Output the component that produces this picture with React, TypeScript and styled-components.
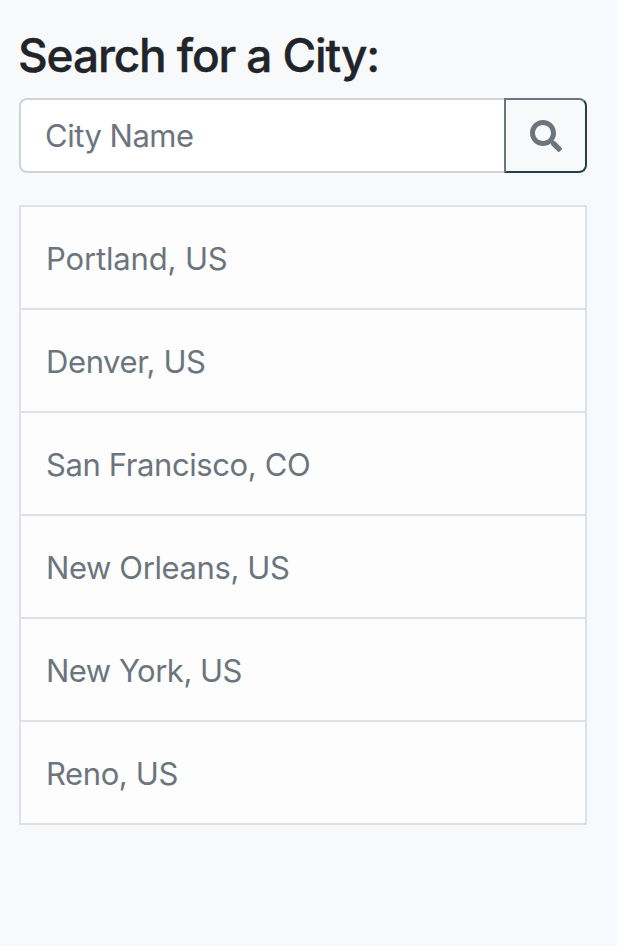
import React from "react";
import styled, { createGlobalStyle } from "styled-components";
import { FaSearch } from "react-icons/fa";

const GlobalStyle = createGlobalStyle`
  * { box-sizing: border-box; }
  body { margin: 0; background: #fff; font-family: Inter, "Liberation Sans", sans-serif; }
`;

const Page = styled.main`
  width: 617px;
  height: 946px;
  padding: 31px 30px 0 19px;
  background: #f8f9fb;
`;

const Title = styled.h1`
  margin: 0 0 9px -1px;
  height: 58px;
  font-size: 46px;
  line-height: 48px;
  font-weight: 500;
  letter-spacing: -1.13px;
  -webkit-text-stroke: 0.4px #212529;
  color: #212529;
  white-space: nowrap;
`;

const SearchForm = styled.form`
  display: flex;
  width: 568px;
  height: 75px;
  margin-bottom: 32px;
`;

const CityInput = styled.input`
  flex: 1;
  min-width: 0;
  padding: 0 24px;
  border: 2px solid #ced4da;
  border-right: 0;
  border-radius: 8px 0 0 8px;
  background: #fff;
  font: 400 31px Inter, "Liberation Sans", sans-serif;
  letter-spacing: -0.5px;
  &::placeholder { color: #6c757d; opacity: 1; }
`;

const SearchButton = styled.button`
  display: flex;
  align-items: center;
  justify-content: center;
  width: 83px;
  padding: 0;
  border: 2px solid;
  border-color: #6c757d #24404f #24404f #6c757d;
  border-radius: 0 8px 8px 0;
  background: transparent;
  color: #6c757d;
  font-size: 32px;
`;

const CityList = styled.ul`
  width: 568px;
  margin: 0;
  padding: 0;
  list-style: none;
  border: 2px solid #dee2e6;
  border-bottom: 0;
`;

const CityRow = styled.li<{ $tracking?: number }>`
  display: flex;
  align-items: center;
  height: 103px;
  padding: 2px 25px 0;
  border-bottom: 2px solid #dee2e6;
  background: #fdfdfe;
  color: #6c757d;
  font-size: 31px;
  letter-spacing: ${({ $tracking = -0.4 }) => $tracking}px;
`;

const cities = [
  { name: "Portland, US", tracking: -0.15 },
  { name: "Denver, US" },
  { name: "San Francisco, CO" },
  { name: "New Orleans, US" },
  { name: "New York, US", tracking: -0.5 },
  { name: "Reno, US" },
];

export default function App() {
  return (
    <Page>
      <GlobalStyle />
      <Title>Search for a City:</Title>
      <SearchForm>
        <CityInput placeholder="City Name" />
        <SearchButton type="button" aria-label="Search"><FaSearch /></SearchButton>
      </SearchForm>
      <CityList>
        {cities.map(({ name, tracking }) => <CityRow key={name} $tracking={tracking}>{name}</CityRow>)}
      </CityList>
    </Page>
  );
}
